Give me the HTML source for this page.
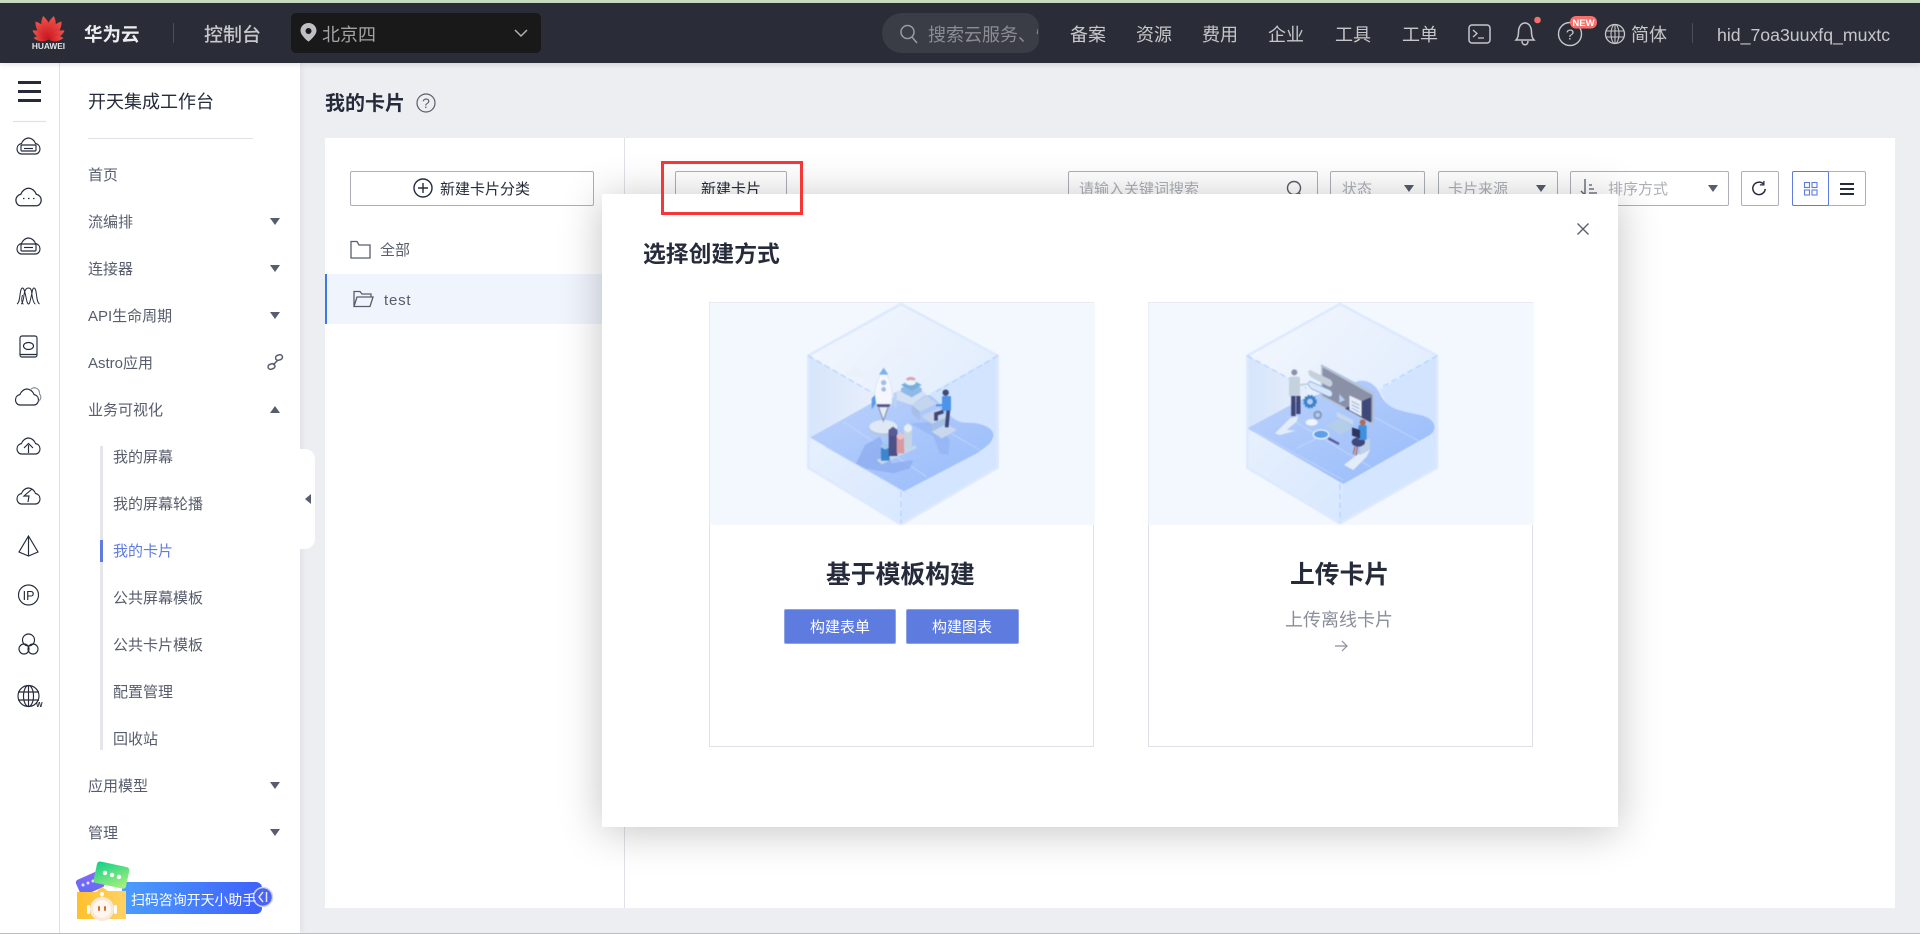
<!DOCTYPE html>
<html lang="zh"><head><meta charset="utf-8"><title>我的卡片</title>
<style>
html,body{margin:0;padding:0;width:1920px;height:934px;overflow:hidden;background:#eceef2}
body{position:relative;font-family:"Liberation Sans","Noto Sans CJK SC",sans-serif;color:#252b3a}
.a{position:absolute}
.t{position:absolute;white-space:nowrap;line-height:20px;height:20px;font-size:15px;margin-top:1.5px}
.m{color:#575d6c}
.h{color:#c6c7ca;font-size:18px}
.b{position:absolute;box-sizing:border-box;border:1px solid #adb0b8;border-radius:2px;background:#fff;height:35px;top:171px}
.p{color:#adb0b8}
svg{position:absolute;overflow:visible}
.tri{position:absolute;width:0;height:0;border-left:5px solid transparent;border-right:5px solid transparent;border-top:7px solid #575d6c}
.up{border-top:0;border-bottom:7px solid #575d6c}
.card{position:absolute;box-sizing:border-box;top:302px;width:385px;height:445px;border:1px solid #dfe1e6;background:#fff}
.ill{filter:blur(.5px)}
</style></head><body>

<div class="a" style="left:0;top:0;width:1920px;height:3px;background:#c7dcc0"></div>
<div class="a" style="left:0;top:3px;width:1920px;height:60px;background:#2a2d37;box-shadow:0 2px 5px rgba(0,0,0,.1);z-index:3"></div>

<div class="a" style="left:0;top:0;width:1920px;height:63px;z-index:4">
<svg style="left:0;top:0" width="1920" height="63" viewBox="0 0 1920 63">
<defs><linearGradient id="rd" x1="0" y1="0" x2="0" y2="1"><stop offset="0" stop-color="#f0544c"/><stop offset="1" stop-color="#c8141e"/></linearGradient>
<path id="pt" d="M0 0C-6-6-7.500-16-2.500-24C4-17 5.500-7 0 0Z" fill="url(#rd)"/></defs>
<g transform="translate(48.500 39.500)"><use href="#pt" transform="rotate(-78) scale(.62)"/><use href="#pt" transform="rotate(-55) scale(.76)"/><use href="#pt" transform="rotate(-30) scale(.92)"/><use href="#pt" transform="rotate(-7)"/><use href="#pt" transform="scale(-1 1) rotate(-7)"/><use href="#pt" transform="scale(-1 1) rotate(-30) scale(.92)"/><use href="#pt" transform="scale(-1 1) rotate(-55) scale(.76)"/><use href="#pt" transform="scale(-1 1) rotate(-78) scale(.62)"/></g>
<path d="M173.500 23V43" stroke="#4b4e57"/>
<path d="M308.500 23c-4.500 0-8 3.400-8 7.600 0 5 8 11 8 11s8-6 8-11c0-4.200-3.500-7.600-8-7.600z" fill="#bfc0c4"/><circle cx="308.500" cy="31" r="3" fill="#1a1a1a"/>
<path d="M515 30l6 6 6-6" fill="none" stroke="#b0b1b5" stroke-width="1.500"/>
<circle cx="907.500" cy="32" r="6.500" fill="none" stroke="#9a9ca2" stroke-width="1.500"/><path d="M912 37l5 6" stroke="#9a9ca2" stroke-width="1.500"/>
<rect x="1469" y="25" width="21" height="18" rx="3" fill="none" stroke="#c6c7ca" stroke-width="1.500"/><path d="M1473 30l4 3.500-4 3.500M1478 38h6" fill="none" stroke="#c6c7ca" stroke-width="1.300"/>
<path d="M1516 40c2-2 2.500-4 2.500-8 0-5 2.500-9 6.500-9s6.500 4 6.500 9c0 4 .5 6 2.500 8zM1522 41c0 5 6 5 6 0" fill="none" stroke="#c6c7ca" stroke-width="1.500"/><circle cx="1537.500" cy="20" r="3.300" fill="#f66f6a"/>
<circle cx="1570" cy="34" r="11.500" fill="none" stroke="#c6c7ca" stroke-width="1.400"/>
<circle cx="1615" cy="34" r="9.500" fill="none" stroke="#c6c7ca" stroke-width="1.300"/><ellipse cx="1615" cy="34" rx="4" ry="9.500" fill="none" stroke="#c6c7ca" stroke-width="1.100"/><path d="M1605.500 31h19M1605.500 37h19M1615 24.500v19" stroke="#c6c7ca" stroke-width="1.100"/>
<path d="M1692.500 23V43" stroke="#4b4e57"/>
<rect x="1570" y="16" width="27" height="12.500" rx="6" fill="#f66f6a"/>
<text x="1583.500" y="26" fill="#fff" font-size="9.500" text-anchor="middle" font-family="Liberation Sans" font-weight="bold">NEW</text>
<text x="48.500" y="49" fill="#e4e4e6" font-size="8.300" text-anchor="middle" font-family="Liberation Sans" font-weight="bold">HUAWEI</text>
<text x="1570" y="39.500" fill="#c6c7ca" font-size="15" text-anchor="middle" font-family="Liberation Sans">?</text>
</svg>
<div class="t" style="left:84px;top:23px;font-size:18.500px;font-weight:700;color:#ecedee">华为云</div>
<div class="t" style="left:204px;top:24px;font-size:19px;font-weight:500;color:#c6c7ca">控制台</div>
<div class="a" style="left:291px;top:13px;width:250px;height:40px;border-radius:5px;background:#191919;z-index:-1"></div>
<div class="t" style="left:322px;top:23px;font-size:18px;color:#a3a4a7">北京四</div>
<div class="a" style="left:882px;top:13px;width:157px;height:40px;border-radius:20px 14px 14px 20px;background:#3a3d46;z-index:-1"></div>
<div class="t" style="left:928px;top:23px;width:110px;overflow:hidden;font-size:18px;color:#8b8d92">搜索云服务、快速</div>
<div class="t h" style="left:1070px;top:23px">备案</div>
<div class="t h" style="left:1136px;top:23px">资源</div>
<div class="t h" style="left:1202px;top:23px">费用</div>
<div class="t h" style="left:1268px;top:23px">企业</div>
<div class="t h" style="left:1335px;top:23px">工具</div>
<div class="t h" style="left:1402px;top:23px">工单</div>
<div class="t h" style="left:1631px;top:23px">简体</div>
<div class="t h" style="left:1717px;top:23px;font-size:17.700px">hid_7oa3uuxfq_muxtc</div>
</div>

<!-- sidebar -->
<div class="a" style="left:0;top:63px;width:300px;height:870px;background:#fff;box-shadow:2px 0 6px rgba(0,0,0,.06)"></div>
<div class="a" style="left:59px;top:63px;width:1px;height:870px;background:#dfe1e6"></div>
<div class="a" style="left:0;top:933px;width:1920px;height:1px;background:#bcbdc2;z-index:6"></div>

<svg style="left:0;top:0" width="60" height="934" viewBox="0 0 60 934" fill="none" stroke="#252b3a" stroke-width="1.150">
<defs><path id="cl" d="M-7 8H7C10 8 11.500 5 11.500 3C11.500 0 9.500-2 7-2.500C6-5.500 3-8 0-8C-3-8-6-5.500-7-2.500C-9.500-2-11.500 0-11.500 3C-11.500 5-10 8-7 8Z"/></defs>
<path d="M18 82.500H41M18 91.500H41M18 100.500H41" stroke-width="3"/>
<path d="M13 121.500H46" stroke="#dfe1e6"/>
<use href="#cl" x="28.500" y="146"/><rect x="21" y="145" width="15" height="6" rx="1"/><path d="M24 148.500h9"/>
<use href="#cl" x="28.500" y="197" transform="translate(-2.800 -19.700) scale(1.100)"/><path d="M23 198.500h1.500M28 198.500h1.500M33 198.500h1.500"/>
<use href="#cl" x="28.500" y="246"/><rect x="21" y="244" width="15" height="7" rx="1"/><path d="M24 247.500h9"/>
<path d="M17 304c2-1 2.500-5 3-9s1-7 2.500-7 2 3 3 7 1.500 9 3 9 2-5 3-9 1-7 2.500-7 2 3 2.500 7 1 8 3 9M23.500 304c-1.500 0-2.500-5-1-9M21 304c1.500 0 2.500-5 3-9s1.500-7 4.500-7 3 3 3.500 7 2 9 3.500 9" stroke-width="1"/>
<rect x="20" y="336" width="17" height="21" rx="2"/><path d="M20 354.500H37"/><ellipse cx="28.500" cy="346" rx="5" ry="3.500"/>
<use href="#cl" x="27" y="397"/><path d="M31 389c4-3 9 0 8.500 5 2.500 3 1 6-1 7" stroke="#8a8e99"/>
<use href="#cl" x="28.500" y="446"/><path d="M28.500 453v-8M24 448l4.500-4.500 4.500 4.500"/>
<use href="#cl" x="28.500" y="496"/><path d="M32 489l-8 7h5l-1 6"/>
<path d="M28.500 536L38 552L28.500 556L19 552ZM28.500 536V556"/>
<circle cx="28.500" cy="595" r="10"/><text x="28.500" y="600" font-size="12.500" text-anchor="middle" fill="#252b3a" stroke="none" font-family="Liberation Sans">IP</text>
<circle cx="28.500" cy="640" r="6"/><circle cx="24" cy="649" r="5"/><circle cx="33" cy="649" r="5"/>
<circle cx="28.500" cy="696" r="10.500"/><ellipse cx="28.500" cy="696" rx="5" ry="10.500"/><path d="M18 692H39M18 700H39M28.500 685.500V706.500"/>
<text x="36" y="707" font-size="7" fill="#252b3a" stroke="none" font-family="Liberation Sans" font-weight="bold">W</text>
</svg>

<div class="t" style="left:88px;top:90px;font-size:18px">开天集成工作台</div>
<div class="a" style="left:88px;top:138px;width:165px;height:1px;background:#dfe1e6"></div>
<div class="t m" style="left:88px;top:164px">首页</div>
<div class="t m" style="left:88px;top:211px">流编排</div><div class="tri" style="left:270px;top:218px"></div>
<div class="t m" style="left:88px;top:258px">连接器</div><div class="tri" style="left:270px;top:265px"></div>
<div class="t m" style="left:88px;top:305px">API生命周期</div><div class="tri" style="left:270px;top:312px"></div>
<div class="t m" style="left:88px;top:352px">Astro应用</div>
<svg style="left:267px;top:354px" width="17" height="17" viewBox="0 0 17 17" fill="none" stroke="#575d6c" stroke-width="1.500"><rect x="8.500" y="1" width="7" height="5" rx="2.500" transform="rotate(-20 12 3.500)"/><rect x="1" y="10" width="7" height="5" rx="2.500" transform="rotate(-20 4.500 12.500)"/><path d="M6 11L11 6"/></svg>
<div class="t m" style="left:88px;top:399px">业务可视化</div><div class="tri up" style="left:270px;top:406px"></div>
<div class="a" style="left:100px;top:446px;width:3px;height:304px;background:#e4e6ec"></div>
<div class="a" style="left:100px;top:540px;width:3px;height:22px;background:#5e7ce0"></div>
<div class="t m" style="left:113px;top:446px">我的屏幕</div>
<div class="t m" style="left:113px;top:493px">我的屏幕轮播</div>
<div class="t" style="left:113px;top:540px;color:#5e7ce0">我的卡片</div>
<div class="t m" style="left:113px;top:587px">公共屏幕模板</div>
<div class="t m" style="left:113px;top:634px">公共卡片模板</div>
<div class="t m" style="left:113px;top:681px">配置管理</div>
<div class="t m" style="left:113px;top:728px">回收站</div>
<div class="t m" style="left:88px;top:775px">应用模型</div><div class="tri" style="left:270px;top:782px"></div>
<div class="t m" style="left:88px;top:822px">管理</div><div class="tri" style="left:270px;top:829px"></div>

<!-- banner -->
<div class="a" style="left:122px;top:882px;width:140px;height:32px;border-radius:0 6px 6px 0;background:linear-gradient(90deg,#4a9dff,#4060fb)"></div>
<svg style="left:60px;top:850px" width="230" height="84" viewBox="60 850 230 84">
<defs><linearGradient id="gb" x1="0" y1="0" x2="1" y2="1"><stop offset="0" stop-color="#10cf8a"/><stop offset="1" stop-color="#b2f37a"/></linearGradient>
<linearGradient id="pb" x1="0" y1="1" x2="1" y2="0"><stop offset="0" stop-color="#5b6cf4"/><stop offset="1" stop-color="#8a66f8"/></linearGradient>
<linearGradient id="yb" x1="0" y1="0" x2="1" y2="0"><stop offset="0" stop-color="#ffc02e"/><stop offset="1" stop-color="#ffd264"/></linearGradient></defs>
<rect x="77" y="875" width="26" height="17" rx="3" fill="url(#pb)" transform="rotate(-24 90 883)"/>
<g fill="#fff" opacity=".8"><circle cx="83" cy="885" r="1.500"/><circle cx="88" cy="883" r="1.500"/><circle cx="93" cy="881" r="1.500"/></g>
<path d="M77 892H96L102 887L108 891H126V919H77Z" fill="url(#yb)"/>
<rect x="95" y="864" width="33" height="22" rx="3" fill="url(#gb)" transform="rotate(12 111 875)"/>
<g fill="#fff"><circle cx="105" cy="873" r="2.200"/><circle cx="112" cy="875" r="2.200"/><circle cx="119" cy="877" r="2.200"/></g>
<circle cx="102" cy="909" r="12" fill="#f8e7db"/><circle cx="102" cy="909" r="9" fill="#fff6ee"/>
<rect x="87" y="905" width="3" height="9" rx="1.500" fill="#fff"/><rect x="114" y="905" width="3" height="9" rx="1.500" fill="#fff"/>
<rect x="98" y="906" width="2" height="5" rx="1" fill="#d86a3c"/><rect x="104" y="906" width="2" height="5" rx="1" fill="#d86a3c"/>
<circle cx="102" cy="894" r="2" fill="#fff"/><path d="M102 894v4" stroke="#fff"/>
<circle cx="263" cy="897" r="9.500" fill="#4a64f0" stroke="#c8d2fa" stroke-width="1.500"/><path d="M263 892l-4 5 4 5M266.500 892v10" fill="none" stroke="#dfe5ff" stroke-width="1.500"/>
</svg>
<div class="t" style="left:131px;top:888px;font-size:14px;color:#fff;letter-spacing:-.1px">扫码咨询开天小助手</div>

<!-- handle -->
<div class="a" style="left:300px;top:449px;width:15px;height:100px;background:#fff;border-radius:0 10px 10px 0;z-index:1"></div>
<div class="a" style="left:305px;top:494px;width:0;height:0;border-top:5px solid transparent;border-bottom:5px solid transparent;border-right:6px solid #575d6c;z-index:2"></div>

<!-- title -->
<div class="t" style="left:325px;top:92px;font-size:20px;font-weight:700">我的卡片</div>
<svg style="left:416px;top:93px" width="20" height="20" viewBox="0 0 20 20"><circle cx="10" cy="10" r="9" fill="none" stroke="#575d6c" stroke-width="1.200"/><text x="10" y="15" font-size="14" text-anchor="middle" fill="#575d6c" font-family="Liberation Sans">?</text></svg>

<!-- panel -->
<div class="a" style="left:325px;top:138px;width:1570px;height:770px;background:#fff"></div>
<div class="a" style="left:624px;top:138px;width:1px;height:770px;background:#dfe1e6"></div>
<div class="b" style="left:350px;width:244px"></div>
<svg style="left:413px;top:178px" width="20" height="20" viewBox="0 0 20 20" fill="none" stroke="#252b3a" stroke-width="1.400"><circle cx="10" cy="10" r="9"/><path d="M10 5v10M5 10h10"/></svg>
<div class="t" style="left:440px;top:178px">新建卡片分类</div>
<svg style="left:350px;top:240px" width="21" height="19" viewBox="0 0 21 19" fill="none" stroke="#575d6c" stroke-width="1.300"><path d="M1 3V18H20V5H9L7 1.500H1Z"/></svg>
<div class="t m" style="left:380px;top:239px">全部</div>
<div class="a" style="left:325px;top:274px;width:300px;height:50px;background:#f0f4fd"></div>
<div class="a" style="left:325px;top:274px;width:2px;height:50px;background:#3a7be8"></div>
<svg style="left:353px;top:290px" width="21" height="18" viewBox="0 0 21 18" fill="none" stroke="#575d6c" stroke-width="1.300"><path d="M1 16V1.500H7L9 4H18V7M1 16.500H17L20 7H4Z"/></svg>
<div class="t m" style="left:384px;top:289px;letter-spacing:.8px">test</div>

<div class="b" style="left:675px;width:112px"></div>
<div class="t" style="left:701px;top:178px">新建卡片</div>
<div class="b" style="left:1068px;width:250px"></div>
<div class="t p" style="left:1079px;top:178px">请输入关键词搜索</div>
<svg style="left:1286px;top:180px" width="18" height="18" viewBox="0 0 18 18" fill="none" stroke="#575d6c" stroke-width="1.400"><circle cx="8" cy="8" r="6.500"/><path d="M12.500 12.500L17 17"/></svg>
<div class="b" style="left:1330px;width:95px"></div><div class="t p" style="left:1342px;top:178px">状态</div><div class="tri" style="left:1404px;top:185px"></div>
<div class="b" style="left:1438px;width:120px"></div><div class="t p" style="left:1448px;top:178px">卡片来源</div><div class="tri" style="left:1536px;top:185px"></div>
<div class="b" style="left:1570px;width:159px"></div><div class="t p" style="left:1608px;top:178px">排序方式</div><div class="tri" style="left:1708px;top:185px"></div>
<svg style="left:1580px;top:178px" width="18" height="19" viewBox="0 0 18 19" fill="none" stroke="#575d6c" stroke-width="1.300"><path d="M5 1V17M1 13L5 17M9 7h3M9 11h5M9 15h8"/></svg>
<div class="b" style="left:1741px;width:38px"></div>
<svg style="left:1751px;top:180px" width="16" height="16" viewBox="0 0 18 18" fill="none" stroke="#252b3a" stroke-width="1.700"><path d="M14 4.500A7 7 0 1 0 16 10"/><path d="M14.500 1V5.500H10" stroke-width="1.400"/></svg>
<div class="b" style="left:1792px;width:74px"></div>
<div class="b" style="left:1792px;width:37px;border-color:#5e7ce0"></div>
<svg style="left:1804px;top:182px" width="14" height="14" viewBox="0 0 14 14" fill="none" stroke="#5e7ce0" stroke-width="1.100"><rect x=".5" y=".5" width="5" height="5"/><rect x="8" y=".5" width="5" height="5"/><rect x=".5" y="8" width="5" height="5"/><rect x="8" y="8" width="5" height="5"/></svg>
<div class="a" style="left:1840px;top:183px;width:14px;height:2px;background:#252b3a"></div><div class="a" style="left:1840px;top:188px;width:14px;height:2px;background:#252b3a"></div><div class="a" style="left:1840px;top:193px;width:14px;height:2px;background:#252b3a"></div>

<!-- modal -->
<div class="a" style="left:602px;top:194px;width:1016px;height:633px;background:#fff;box-shadow:0 4px 40px rgba(0,0,0,.24);z-index:2">
</div>
<div class="a" style="left:0;top:0;width:1920px;height:934px;z-index:3;pointer-events:none">
<div class="a" style="left:661px;top:161px;width:142px;height:54px;box-sizing:border-box;border:3px solid #f63737"></div>
<svg style="left:1577px;top:223px" width="12" height="12" viewBox="0 0 12 12" stroke="#575d6c" stroke-width="1.300"><path d="M.5.5L11.500 11.500M11.500.5L.5 11.500"/></svg>
<div class="t" style="left:643px;top:242px;font-size:22.800px;font-weight:700">选择创建方式</div>

<div class="card" style="left:709px"></div>
<div class="card" style="left:1148px"></div>

<!-- illustration 1 -->
<svg class="ill" style="left:700px;top:290px" width="400" height="240" viewBox="0 0 1200 720">
<defs>
<linearGradient id="hx" x1="0" y1="0" x2="1" y2="1"><stop offset="0" stop-color="#f5f8fe"/><stop offset=".6" stop-color="#e3eefd"/><stop offset="1" stop-color="#cfe2ff"/></linearGradient>
<linearGradient id="lw" x1="0" y1="0" x2="1" y2="0"><stop offset="0" stop-color="#d6e5fb"/><stop offset="1" stop-color="#e9f0fb"/></linearGradient>
<linearGradient id="lo" x1="0" y1="0" x2="1" y2="1"><stop offset="0" stop-color="#e7f0fd"/><stop offset="1" stop-color="#d8e8ff"/></linearGradient>
<linearGradient id="fl" x1="0" y1="0" x2="1" y2="1"><stop offset="0" stop-color="#bcd2fb"/><stop offset="1" stop-color="#97bbfb"/></linearGradient>
<clipPath id="ci"><rect x="29" y="38" width="1156" height="667"/></clipPath>
</defs>
<rect x="29" y="38" width="1156" height="667" fill="#f3f8ff"/>
<g clip-path="url(#ci)">
<path d="M603 42L893 197V533L603 703L325 533V197Z" fill="url(#hx)"/>
<path d="M325 197L540 320L330 442L325 533Z" fill="url(#lw)"/>
<path d="M893 197L690 310L760 390L880 430L893 533Z" fill="#d2e4ff"/>
<path d="M330 442L610 605L603 703L325 533Z" fill="url(#lo)"/>
<path d="M610 605L880 450L893 533L603 703Z" fill="#d3e5ff"/>
<path d="M330 442L540 325L690 315C730 340 745 398 800 398C855 398 890 420 878 445C870 465 850 475 830 490L610 605Z" fill="url(#fl)"/>
<path d="M375 470L640 620M430 395L680 560M700 400L840 480" stroke="#c9dbfc" stroke-width="2" fill="none"/>
<path d="M603 42L893 197V533L603 703L325 533V197Z" fill="none" stroke="#dde9fd" stroke-width="8"/>
<path d="M325 197L520 310M893 197L700 310M603 605V700" stroke="#a9cdff" stroke-width="3" stroke-dasharray="18 10" fill="none"/>
<g fill="#eaf1fb"><circle cx="590" cy="192" r="11"/><circle cx="605" cy="185" r="17"/><circle cx="622" cy="193" r="11"/><circle cx="465" cy="245" r="17"/><circle cx="448" cy="252" r="10"/><circle cx="486" cy="254" r="10"/></g>
<path d="M468 520L495 465L540 440L575 520L640 510L630 535L580 550L495 535Z" fill="#8aa9ee" opacity=".7"/>
<path d="M630 400L700 395L750 450L745 495L720 490L700 440Z" fill="#8aa9ee" opacity=".45"/>
<ellipse cx="550" cy="417" rx="42" ry="20" fill="#b5c6de"/><ellipse cx="550" cy="410" rx="42" ry="20" fill="#dfe8f4"/>
<path d="M535 350H565L550 392Z" fill="#e6edf7" stroke="#8f9bb6" stroke-width="4"/>
<path d="M528 340H572L568 350H533Z" fill="#4f4f80"/>
<path d="M551 240C570 262 580 300 575 342H525C520 300 532 262 551 240Z" fill="#f4f7fe" stroke="#d7e2f5" stroke-width="2"/>
<path d="M551 233L565 254H537Z" fill="#7fb0ee"/>
<circle cx="551" cy="278" r="8" fill="#a4bce8"/><circle cx="551" cy="298" r="7" fill="#a4bce8"/>
<path d="M525 315L515 325V358L528 340Z" fill="#5b9be8"/>
<path d="M590 305L640 285L680 312L635 345L590 330Z" fill="#d4e0f4"/><path d="M580 310L590 305V360L580 345Z" fill="#bcd2f4"/>
<path d="M635 345L680 318L710 340L660 365Z" fill="#c5d5ee"/><path d="M635 345L660 365V392L635 370Z" fill="#a6bfe6"/>
<path d="M665 378L715 355L745 380L695 402Z" fill="#c5d5ee"/><path d="M695 402L745 380V400L695 424Z" fill="#a6bfe6"/>
<path d="M695 425L740 402L770 420L725 445Z" fill="#c9d8ee"/>
<path d="M603 295L635 275L665 295V305L635 322L603 305Z" fill="#8fbae8"/><path d="M603 285L635 268L665 285L635 302Z" fill="#76aede"/>
<path d="M617 268C625 258 640 258 648 268L632 276Z" fill="#d8a5ab"/><ellipse cx="632" cy="278" rx="16" ry="8" fill="#eaf2fc"/>
<rect x="726" y="318" width="27" height="45" rx="3" fill="#4d94e8"/>
<circle cx="737" cy="308" r="9.500" fill="#3f4a78"/>
<path d="M745 362L740 412M730 365L708 372V392" stroke="#3f4678" stroke-width="11" fill="none"/>
<path d="M728 345L708 346" stroke="#4d94e8" stroke-width="6"/>
<path d="M530 510L648 465V475L545 523Z" fill="#c9d6ea"/>
<rect x="543" y="470" width="26" height="42" fill="#3c86cf"/><path d="M543 465L556 458L569 465V472L556 479L543 472Z" fill="#9fc8ef"/>
<rect x="566" y="420" width="26" height="78" fill="#4c5088"/><path d="M566 420L579 410L592 420V432L579 440L566 432Z" fill="#585c94"/>
<rect x="590" y="435" width="23" height="55" fill="#d89aa0"/><path d="M590 435L601 428L613 435V443L601 450L590 443Z" fill="#efc0c4"/>
<rect x="612" y="410" width="24" height="68" fill="#c3d5e4"/><path d="M612 410L624 400L636 410V420L624 428L612 420Z" fill="#e7eff5"/>
</g>
</svg>

<!-- illustration 2 -->
<svg class="ill" style="left:1140px;top:290px" width="400" height="240" viewBox="0 0 1200 720">
<defs><clipPath id="cj"><rect x="25" y="38" width="1157" height="667"/></clipPath></defs>
<rect x="25" y="38" width="1157" height="667" fill="#f3f8ff"/>
<g clip-path="url(#cj)">
<path d="M600 42L891 197V533L600 700L322 533V197Z" fill="url(#hx)"/>
<path d="M322 197L530 310L322 415L322 533Z" fill="url(#lw)"/>
<path d="M891 197L720 300L750 360L870 400L891 533Z" fill="#d2e4ff"/>
<path d="M322 415L610 582L600 700L322 533Z" fill="url(#lo)"/>
<path d="M610 582L870 440L891 533L600 700Z" fill="#d3e5ff"/>
<path d="M322 415L480 330L640 280C670 260 705 280 720 310C740 358 780 362 840 375C885 385 895 415 870 435L610 582Z" fill="url(#fl)"/>
<path d="M345 425L610 570M440 380L690 530M700 380L840 455M470 475L540 440" stroke="#c9dbfc" stroke-width="2" fill="none"/>
<path d="M600 42L891 197V533L600 700L322 533V197Z" fill="none" stroke="#dde9fd" stroke-width="8"/>
<path d="M322 197L500 295M891 197L720 295M600 582V697" stroke="#a9cdff" stroke-width="3" stroke-dasharray="18 10" fill="none"/>
<path d="M405 430L450 385L475 378L470 395L440 420L468 422L420 435Z" fill="#e3edfa"/>
<path d="M612 525L650 495L690 480L680 500L640 540Z" fill="#e3edfa"/>
<path d="M543 222L703 308V405L543 320Z" fill="#b4c3d9"/><path d="M548 232L697 315V396L548 316Z" fill="#8a90a6"/>
<path d="M615 355L693 322V398Z" fill="#3f4878"/>
<path d="M628 316L665 333V380L628 360Z" fill="#e8eef8"/><path d="M635 334L658 346M635 344L658 356M635 354L658 366" stroke="#7d9ad0" stroke-width="2"/>
<path d="M598 312L615 330L598 338Z" fill="#b2d1f1"/>
<path d="M510 240L570 268C582 276 578 292 566 290L514 262C504 254 502 243 510 240Z" fill="#c6cfdc"/>
<path d="M510 274L570 300C582 308 578 322 566 320L514 296C504 288 502 277 510 274Z" fill="#d8e6f6" stroke="#6aa3e4" stroke-width="2"/>
<path d="M590 365L640 390L640 405L590 380Z" fill="#c6d8ec"/>
<path d="M558 405L600 385L640 412L600 435Z" fill="#b4cde9"/>
<circle cx="510" cy="335" r="15" fill="none" stroke="#3b80c8" stroke-width="11" stroke-dasharray="5 3"/><circle cx="510" cy="335" r="13" fill="none" stroke="#3b80c8" stroke-width="8"/>
<circle cx="533" cy="375" r="10" fill="none" stroke="#8a9ab0" stroke-width="6"/>
<ellipse cx="515" cy="397" rx="18" ry="10" fill="#f0f5fc"/>
<rect x="447" y="260" width="33" height="60" rx="6" fill="#c4d2e0"/>
<circle cx="463" cy="247" r="9" fill="#8a92a8"/>
<path d="M478 285L505 282" stroke="#c4d2e0" stroke-width="6"/>
<path d="M460 318V378M475 318V372" stroke="#3f4678" stroke-width="13"/>
<ellipse cx="543" cy="433" rx="23" ry="13" fill="#5f9fe8" stroke="#eef4fc" stroke-width="4"/>
<path d="M565 445L597 462" stroke="#5a5a9a" stroke-width="7"/>
<path d="M660 455L690 445V480L660 495Z" fill="#c0d0e8"/>
<path d="M645 470L640 492M652 470L648 496" stroke="#b06a5c" stroke-width="4"/>
<ellipse cx="655" cy="456" rx="20" ry="14" fill="#3f4878"/>
<rect x="655" y="405" width="25" height="45" rx="5" fill="#4090e0"/>
<circle cx="668" cy="397" r="9" fill="#b56a50"/>
<path d="M636 412L660 420V445L636 437Z" fill="#2e3460"/>
</g>
</svg>

<div class="t" style="left:826px;top:562px;font-size:24.800px;line-height:24px;height:24px;font-weight:700">基于模板构建</div>
<div class="a" style="left:784px;top:609px;width:112px;height:35px;box-sizing:border-box;border:1px solid #8ea1e0;border-radius:2px;background:#5e7ce0"></div>
<div class="a" style="left:906px;top:609px;width:113px;height:35px;box-sizing:border-box;border:1px solid #8ea1e0;border-radius:2px;background:#5e7ce0"></div>
<div class="t" style="left:810px;top:616px;color:#fff">构建表单</div>
<div class="t" style="left:932px;top:616px;color:#fff">构建图表</div>

<div class="t" style="left:1290px;top:562px;font-size:24.800px;line-height:24px;height:24px;font-weight:700">上传卡片</div>
<div class="t" style="left:1285px;top:608.500px;font-size:18px;color:#8a8e99">上传离线卡片</div>
<svg style="left:1334px;top:640px" width="14" height="12" viewBox="0 0 14 12" fill="none" stroke="#8a8e99" stroke-width="1.200"><path d="M1 6H13M8 1L13 6L8 11"/></svg>
</div>

</body></html>
